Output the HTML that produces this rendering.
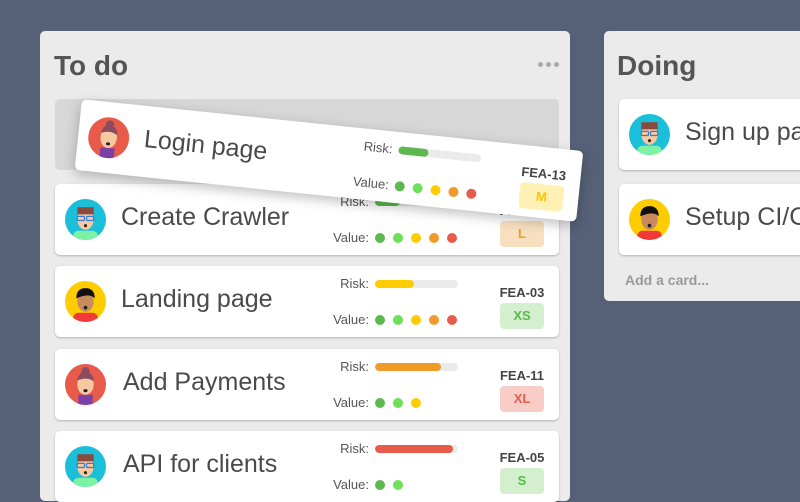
<!DOCTYPE html>
<html><head><meta charset="utf-8"><style>
*{box-sizing:border-box;margin:0;padding:0}
body{width:800px;height:488px;overflow:hidden;background:#566177;font-family:"Liberation Sans",sans-serif;position:relative}
.col{position:absolute;background:#ebebeb;border-radius:5px}
.ct{position:absolute;font-weight:bold;font-size:28px;color:#555}
.card{position:absolute;width:504px;height:71px;background:#fff;border-radius:5px;box-shadow:0 1px 2px rgba(0,0,0,.25)}
.av{position:absolute;left:10px;top:15px;width:41px;height:41px}
.t{position:absolute;left:66px;top:19px;font-size:25px;color:#4a4a4a;white-space:nowrap}
.rl{position:absolute;right:190px;top:10px;font-size:13px;color:#555}
.bar{position:absolute;left:320px;top:14px;width:83px;height:8px;border-radius:4px;background:#ebebeb;overflow:hidden}
.bar i{display:block;height:100%;border-radius:4px}
.vl{position:absolute;right:190px;top:46px;font-size:13px;color:#555}
.dots{position:absolute;left:320px;top:49px;display:flex;gap:8px}
.dots i{width:10px;height:10px;border-radius:50%;display:block}
.g1{background:#5cb84f}.g2{background:#6ee05a}.y{background:#ffcc00}.o{background:#f09a2a}.r{background:#e85b4a}
.id{position:absolute;left:432px;width:70px;text-align:center;top:19px;font-size:13px;font-weight:bold;color:#444}
.bd{position:absolute;left:445px;top:37px;width:44px;height:26px;border-radius:4px;font-size:13px;font-weight:bold;text-align:center;line-height:26px}
</style></head><body>
<svg width="0" height="0" style="position:absolute">
<defs>
<symbol id="a1" viewBox="0 0 40 40"><circle cx="20" cy="20" r="20" fill="#e85b4a"/><clipPath id="c1"><circle cx="20" cy="20" r="20"/></clipPath><g clip-path="url(#c1)"><rect x="13" y="30" width="14" height="12" fill="#7b3fa8"/><ellipse cx="20" cy="20" rx="8" ry="10" fill="#f7c9a1"/><path d="M12 16 Q14 6 22 8 Q28 10 28 17 Q22 12 12 16Z" fill="#8a4b5e"/><circle cx="20" cy="7" r="4" fill="#8a4b5e"/><ellipse cx="20" cy="26" rx="2" ry="1.5" fill="#222"/></g></symbol>
<symbol id="a2" viewBox="0 0 40 40"><circle cx="20" cy="20" r="20" fill="#1bbfd9"/><clipPath id="c2"><circle cx="20" cy="20" r="20"/></clipPath><g clip-path="url(#c2)"><rect x="8" y="31" width="24" height="12" rx="5" fill="#7ef2a4"/><ellipse cx="20" cy="20" rx="8" ry="10" fill="#f7c9a1"/><rect x="12" y="8" width="16" height="7" fill="#8a4b3e"/><rect x="12" y="17" width="7" height="4" rx="1" fill="none" stroke="#3a7bd5" stroke-width="1.2"/><rect x="21" y="17" width="7" height="4" rx="1" fill="none" stroke="#3a7bd5" stroke-width="1.2"/><ellipse cx="20" cy="26" rx="1.5" ry="1.5" fill="#222"/></g></symbol>
<symbol id="a3" viewBox="0 0 40 40"><circle cx="20" cy="20" r="20" fill="#ffcc00"/><clipPath id="c3"><circle cx="20" cy="20" r="20"/></clipPath><g clip-path="url(#c3)"><rect x="8" y="31" width="24" height="12" rx="5" fill="#f03a3a"/><ellipse cx="20" cy="20" rx="8" ry="10" fill="#c98a5e"/><path d="M11 17 Q11 7 20 7 Q29 7 29 17 Q24 11 11 17Z" fill="#111"/><ellipse cx="20" cy="26" rx="1.8" ry="1.8" fill="#222"/></g></symbol>
</defs></svg>

<div class="col" style="left:40px;top:31px;width:530px;height:470px">
<div class="ct" style="left:14px;top:19px">To do</div>
<div style="position:absolute;left:498px;top:31px;display:flex;gap:3px"><i style="width:5px;height:5px;border-radius:50%;background:#aaa;display:block"></i><i style="width:5px;height:5px;border-radius:50%;background:#aaa;display:block"></i><i style="width:5px;height:5px;border-radius:50%;background:#aaa;display:block"></i></div>
<div style="position:absolute;left:15px;top:68px;width:504px;height:71px;background:#d7d7d7;border-radius:5px"></div>
</div>

<div class="col" style="left:604px;top:31px;width:220px;height:270px">
<div class="ct" style="left:13px;top:19px">Doing</div>
<div class="card" style="left:15px;top:68px"><svg class="av"><use href="#a2"/></svg><div class="t">Sign up page</div></div>
<div class="card" style="left:15px;top:153px"><svg class="av"><use href="#a3"/></svg><div class="t">Setup CI/CD</div></div>
<div style="position:absolute;left:21px;top:241px;font-size:14px;font-weight:bold;color:#999">Add a card...</div>
</div>

<div class="card" style="left:55px;top:184px"><svg class="av"><use href="#a2"/></svg><div class="t">Create Crawler</div>
<div class="rl">Risk:</div><div class="bar"><i class="g1" style="width:30%"></i></div>
<div class="vl">Value:</div><div class="dots"><i class="g1"></i><i class="g2"></i><i class="y"></i><i class="o"></i><i class="r"></i></div>
<div class="id">FEA-08</div><div class="bd" style="background:#f8dfc0;color:#f09a2a">L</div></div>

<div class="card" style="left:55px;top:266px"><svg class="av"><use href="#a3"/></svg><div class="t">Landing page</div>
<div class="rl">Risk:</div><div class="bar"><i class="y" style="width:47%"></i></div>
<div class="vl">Value:</div><div class="dots"><i class="g1"></i><i class="g2"></i><i class="y"></i><i class="o"></i><i class="r"></i></div>
<div class="id">FEA-03</div><div class="bd" style="background:#d3efcd;color:#5cb84f">XS</div></div>

<div class="card" style="left:55px;top:349px"><svg class="av"><use href="#a1"/></svg><div class="t" style="left:68px">Add Payments</div>
<div class="rl">Risk:</div><div class="bar"><i class="o" style="width:80%"></i></div>
<div class="vl">Value:</div><div class="dots"><i class="g1"></i><i class="g2"></i><i class="y"></i></div>
<div class="id">FEA-11</div><div class="bd" style="background:#f8cdc8;color:#e85b4a">XL</div></div>

<div class="card" style="left:55px;top:431px"><svg class="av"><use href="#a2"/></svg><div class="t" style="left:68px">API for clients</div>
<div class="rl">Risk:</div><div class="bar"><i class="r" style="width:94%"></i></div>
<div class="vl">Value:</div><div class="dots"><i class="g1"></i><i class="g2"></i></div>
<div class="id">FEA-05</div><div class="bd" style="background:#d3efcd;color:#5cb84f">S</div></div>

<div class="card" style="left:77px;top:125px;transform:rotate(5.9deg);box-shadow:0 4px 12px rgba(0,0,0,.25)"><svg class="av"><use href="#a1"/></svg><div class="t">Login page</div>
<div class="rl">Risk:</div><div class="bar"><i class="g1" style="width:36%"></i></div>
<div class="vl">Value:</div><div class="dots"><i class="g1"></i><i class="g2"></i><i class="y"></i><i class="o"></i><i class="r"></i></div>
<div class="id">FEA-13</div><div class="bd" style="background:#fff0b3;color:#ffc400">M</div></div>
</body></html>
